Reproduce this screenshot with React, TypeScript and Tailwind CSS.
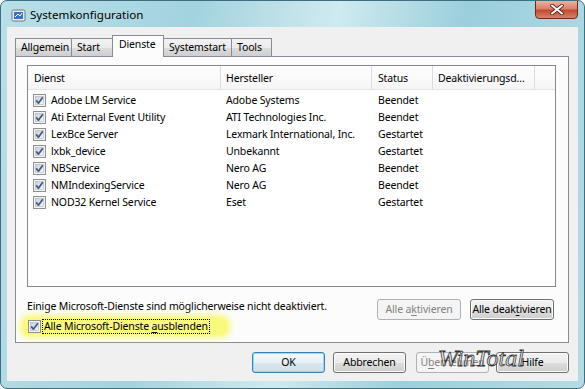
import type { ReactNode } from "react";

const services = [
  ["Adobe LM Service", "Adobe Systems", "Beendet"],
  ["Ati External Event Utility", "ATI Technologies Inc.", "Beendet"],
  ["LexBce Server", "Lexmark International, Inc.", "Gestartet"],
  ["lxbk_device", "Unbekannt", "Gestartet"],
  ["NBService", "Nero AG", "Beendet"],
  ["NMIndexingService", "Nero AG", "Beendet"],
  ["NOD32 Kernel Service", "Eset", "Gestartet"],
];

function CheckBox() {
  return (
    <svg width="13" height="13" viewBox="0 0 13 13" className="shrink-0">
      <defs>
        <linearGradient id="cbfill" x1="0" y1="0" x2="1" y2="1">
          <stop offset="0" stopColor="#cbcfd5" />
          <stop offset="1" stopColor="#f7f7f7" />
        </linearGradient>
      </defs>
      <rect x="0.5" y="0.5" width="12" height="12" fill="#f4f4f4" stroke="#8e8f8f" />
      <rect x="2.5" y="2.5" width="8" height="8" fill="url(#cbfill)" stroke="#b0b3b8" strokeWidth="0.6" />
      <path d="M3.2 6.4 L5.4 9.2 L9.8 3.2" fill="none" stroke="#3d5a8a" strokeWidth="1.7" strokeLinejoin="round" />
    </svg>
  );
}

function Btn({
  children,
  kind = "normal",
  className = "",
}: {
  children: ReactNode;
  kind?: "normal" | "default" | "disabled";
  className?: string;
}) {
  const look =
    kind === "disabled"
      ? "border-[#adb2b5] bg-[#f4f4f4] text-[#838383]"
      : kind === "default"
        ? "border-[#3c7fb1] bg-[linear-gradient(180deg,#f4f9fc_0%,#e8f1f6_50%,#d8e6ee_50%,#cfe0ea_100%)] shadow-[inset_0_0_0_1px_#9fd8f6] text-black"
        : "border-[#707070] bg-[linear-gradient(180deg,#f2f2f2_0%,#ebebeb_50%,#dddddd_50%,#cfcfcf_100%)] shadow-[inset_0_0_0_1px_#fbfbfb] text-black";
  return (
    <div
      className={`flex h-[21px] items-center justify-center whitespace-nowrap rounded-[3px] border ${look} ${className}`}
    >
      {children}
    </div>
  );
}

function Tab({ label, active = false, className = "" }: { label: string; active?: boolean; className?: string }) {
  return active ? (
    <div
      className={`relative z-10 -mb-px flex h-[22px] items-start whitespace-nowrap border border-b-0 border-[#898c95] bg-[#fcfcfc] pl-[6px] pt-[3px] ${className}`}
    >
      {label}
    </div>
  ) : (
    <div
      className={`flex h-[18px] items-center whitespace-nowrap border border-b-0 border-[#898c95] bg-[linear-gradient(180deg,#f2f2f2_0%,#ebebeb_50%,#dddddd_50%,#cfcfcf_100%)] pl-[5px] ${className}`}
    >
      {label}
    </div>
  );
}

export default function App() {
  return (
    <div className="relative flex h-[389px] w-[585px] flex-col overflow-hidden rounded-[7px] border border-[#3f6f7e] bg-[linear-gradient(100deg,#b9dfe8_0%,#a3d3de_30%,#cfeaf0_52%,#9acfdb_72%,#b4dce5_100%)] px-[6px] pb-[7px] font-['Noto_Sans',sans-serif] text-[10.5px] leading-none tracking-[-0.15px] text-black">
      {/* title bar */}
      <div className="flex h-[26px] shrink-0 items-center gap-[4px] pl-[4px] pt-[2px]">
        <svg width="15" height="15" viewBox="0 0 15 15">
          <rect x="1" y="2" width="13" height="11" rx="1.5" fill="#e9eef2" stroke="#6d7780" />
          <rect x="3" y="4" width="9" height="7" fill="#3b6fc4" />
          <path d="M4 9 L7 6 L9 8 L11 5" stroke="#ffffff" strokeWidth="1" fill="none" />
        </svg>
        <span className="text-[11.6px] tracking-normal">Systemkonfiguration</span>
      </div>

      {/* close button */}
      <div className="absolute right-[6px] top-[-1px] flex h-[19px] w-[43px] items-center justify-center rounded-b-[4px] border border-[#6b2a1c] bg-[linear-gradient(180deg,#eab2a2_0%,#d7826c_45%,#c24a30_55%,#d9826a_100%)]">
        <svg width="14" height="11" viewBox="0 0 14 11">
          <path d="M2 1.5 L12 9.5 M12 1.5 L2 9.5" stroke="#5a2418" strokeWidth="3.6" strokeLinecap="round" />
          <path d="M2 1.5 L12 9.5 M12 1.5 L2 9.5" stroke="#ffffff" strokeWidth="2" strokeLinecap="round" />
        </svg>
      </div>

      {/* client area */}
      <div className="flex flex-1 flex-col bg-[#f0f0f0] pl-[8px] pr-[9px] pt-[8px]">
        <div className="flex h-[21px] items-end">
          <Tab label="Allgemein" className="w-[57px]" />
          <Tab label="Start" className="-ml-px w-[42px]" />
          <Tab label="Dienste" active className="-ml-px w-[52px]" />
          <Tab label="Systemstart" className="-ml-px w-[69px]" />
          <Tab label="Tools" className="-ml-px w-[41px]" />
        </div>

        <div className="flex h-[287px] flex-col border border-[#898c95] bg-[#fcfcfc] pl-[11px] pr-[12px] pt-[8px]">
          {/* list view */}
          <div className="flex h-[222px] flex-col border border-[#828790] bg-white">
            <div className="flex h-[24px] shrink-0 items-center border-b border-[#e5e5e5] bg-[linear-gradient(180deg,#ffffff_0%,#f5f5f5_100%)]">
              <div className="w-[193px] border-r border-[#dcdcdc] pl-[6px] leading-[24px]">Dienst</div>
              <div className="w-[151px] border-r border-[#dcdcdc] pl-[5px] leading-[24px]">Hersteller</div>
              <div className="w-[61px] border-r border-[#dcdcdc] pl-[6px] leading-[24px]">Status</div>
              <div className="w-[102px] border-r border-[#dcdcdc] pl-[5px] leading-[24px]">Deaktivierungsd...</div>
            </div>
            <div className="flex flex-col pt-[2px]">
              {services.map(([name, maker, status]) => (
                <div key={name} className="flex h-[17px] items-center">
                  <div className="flex w-[193px] items-center gap-[5px] pl-[5px]">
                    <CheckBox />
                    <span>{name}</span>
                  </div>
                  <div className="w-[151px] pl-[5px]">{maker}</div>
                  <div className="w-[61px] pl-[6px]">{status}</div>
                </div>
              ))}
            </div>
          </div>

          <div className="mt-[12px] flex h-[21px] items-center">
            <span className="mb-[6px]">Einige Microsoft-Dienste sind möglicherweise nicht deaktiviert.</span>
            <div className="ml-auto flex gap-[9px] pr-[2px]">
              <Btn kind="disabled" className="w-[84px]">
                Alle a<span className="underline underline-offset-[2px]">k</span>tivieren
              </Btn>
              <Btn className="w-[84px]">
                Alle deak<span className="underline underline-offset-[2px]">t</span>ivieren
              </Btn>
            </div>
          </div>

          <div className="-ml-[4px] mt-[-2px] flex items-center gap-[2px] self-start rounded-[6px] bg-[#f9f97c] py-[2px] pl-[5px] pr-[18px] shadow-[0_0_6px_3px_#f9f97c]">
            <CheckBox />
            <span className="whitespace-nowrap px-[1px] py-[1px] outline outline-1 outline-dotted outline-black">
              Alle Microsoft-Dienste <span className="underline underline-offset-[2px]">a</span>usblenden
            </span>
          </div>
        </div>

        <div className="mt-[9px] flex justify-end gap-[8px]">
          <Btn kind="default" className="w-[73px]">OK</Btn>
          <Btn className="w-[73px]">Abbrechen</Btn>
          <Btn kind="disabled" className="ml-[2px] w-[73px]">
            Ü<span className="underline underline-offset-[2px]">b</span>ernehmen
          </Btn>
          <Btn className="-ml-px w-[73px]">Hilfe</Btn>
        </div>
      </div>

      {/* watermark */}
      <div className="pointer-events-none absolute left-[437px] top-[345px] font-['Liberation_Serif',serif] text-[24px] italic leading-none tracking-[0px] text-white/60 [-webkit-text-stroke:0.8px_#333333]">
        WinTotal
      </div>
    </div>
  );
}
